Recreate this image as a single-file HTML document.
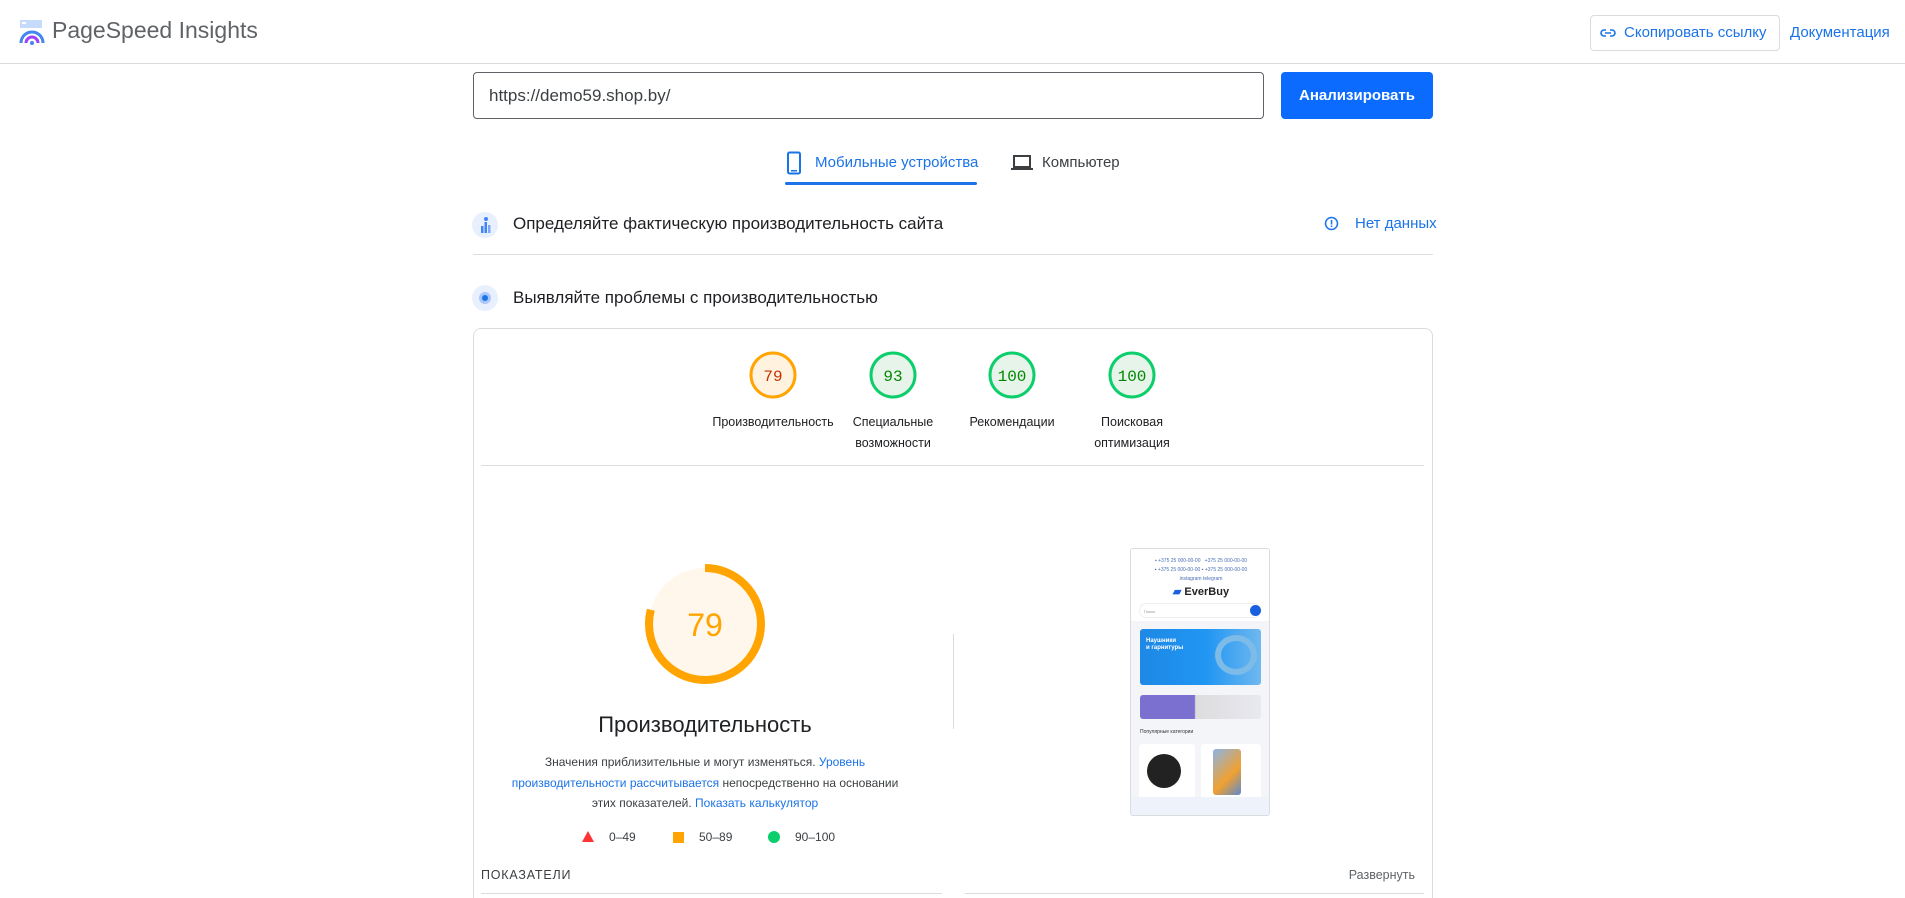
<!DOCTYPE html>
<html style="width:1905px;height:898px;overflow:hidden"><head><meta charset="utf-8"><style>
*{box-sizing:border-box;margin:0;padding:0}
body{width:1905px;height:898px;overflow:hidden;background:#fff;font-family:"Liberation Sans",Arial,sans-serif;color:#202124;position:relative}
.a{position:absolute}
.blue{color:#1a73e8}
</style></head><body>
<!-- header -->
<div class="a" style="left:0;top:63px;width:1905px;height:1px;background:#dadce0"></div>
<svg class="a" style="left:19px;top:19px" width="26" height="26" viewBox="0 0 26 26">
<rect x="1" y="1" width="22" height="8" fill="#c6dafc"/><rect x="3" y="3" width="4" height="2" fill="#fff"/>
<path d="M2 24 A11 11 0 0 1 24 24" fill="none" stroke="#4285f4" stroke-width="3"/>
<path d="M7 24 A6 6 0 0 1 19 24" fill="none" stroke="#a142f4" stroke-width="3"/>
<circle cx="13" cy="24" r="2" fill="#4285f4"/></svg>
<div class="a" style="left:52px;top:17px;font-size:23px;color:#5f6368">PageSpeed Insights</div>
<div class="a" style="left:1590px;top:15px;width:190px;height:36px;border:1px solid #dadce0;border-radius:4px;font-size:15px;color:#1a73e8;line-height:34px;padding-left:33px">Скопировать ссылку</div>
<svg class="a" style="left:1600px;top:26px" width="16" height="14" viewBox="0 0 16 14"><path d="M6 4H4a3 3 0 0 0 0 6h2M10 4h2a3 3 0 0 1 0 6h-2M5 7h6" fill="none" stroke="#1a73e8" stroke-width="1.6"/></svg>
<div class="a blue" style="left:1790px;top:24px;font-size:15px">Документация</div>
<!-- input -->
<div class="a" style="left:473px;top:72px;width:791px;height:47px;border:1px solid #5f6368;border-radius:4px;font-size:17px;line-height:45px;padding-left:15px;color:#3c4043">https://demo59.shop.by/</div>
<div class="a" style="left:1281px;top:72px;width:152px;height:47px;background:#0b6bff;border-radius:4px;color:#fff;font-size:15px;font-weight:bold;text-align:center;line-height:47px">Анализировать</div>
<!-- tabs -->
<svg class="a" style="left:786px;top:151px" width="16" height="24" viewBox="0 0 16 24"><rect x="2" y="1.5" width="12" height="21" rx="1.5" fill="none" stroke="#1a73e8" stroke-width="2"/><rect x="5" y="19" width="6" height="1.5" fill="#1a73e8"/></svg>
<div class="a blue" style="left:815px;top:154px;font-size:15px">Мобильные устройства</div>
<div class="a" style="left:785px;top:182px;width:192px;height:3px;background:#1a73e8;border-radius:2px"></div>
<svg class="a" style="left:1011px;top:154px" width="22" height="18" viewBox="0 0 22 18"><rect x="3" y="2" width="16" height="11" fill="none" stroke="#3c4043" stroke-width="2"/><rect x="0" y="14" width="22" height="2" fill="#3c4043"/></svg>
<div class="a" style="left:1042px;top:154px;font-size:15px;color:#3c4043">Компьютер</div>
<!-- sections -->
<svg class="a" style="left:472px;top:212px" width="26" height="26"><circle cx="13" cy="13" r="13" fill="#e8f0fe"/><rect x="9" y="14" width="2.5" height="7" fill="#4285f4"/><rect x="12.5" y="10" width="2.5" height="11" fill="#4285f4"/><rect x="16" y="13" width="2.5" height="8" fill="#7baaf7"/><circle cx="14" cy="7" r="2" fill="#4285f4"/></svg>
<div class="a" style="left:513px;top:214px;font-size:17px">Определяйте фактическую производительность сайта</div>
<svg class="a" style="left:1324px;top:216px" width="15" height="15"><circle cx="7.5" cy="7.5" r="6" fill="none" stroke="#1a73e8" stroke-width="1.5"/><rect x="6.8" y="4" width="1.5" height="4.5" fill="#1a73e8"/><rect x="6.8" y="9.5" width="1.5" height="1.5" fill="#1a73e8"/></svg>
<div class="a blue" style="left:1355px;top:215px;font-size:15px">Нет данных</div>
<div class="a" style="left:473px;top:254px;width:960px;height:1px;background:#dadce0"></div>
<svg class="a" style="left:472px;top:285px" width="26" height="26"><circle cx="13" cy="13" r="13" fill="#e8f0fe"/><circle cx="13" cy="13" r="6" fill="#a8c7fa"/><circle cx="13" cy="13" r="3" fill="#1a73e8"/></svg>
<div class="a" style="left:513px;top:288px;font-size:17px">Выявляйте проблемы с производительностью</div>
<!-- card -->
<div class="a" style="left:473px;top:328px;width:960px;height:570px;border:1px solid #dadce0;border-bottom:none;border-radius:8px 8px 0 0"></div>
<svg class="a" style="left:0;top:0" width="1905" height="898">
<g font-family="Liberation Mono,monospace" font-size="16" text-anchor="middle">
<circle cx="773" cy="375" r="22" fill="#fff3e0" stroke="#ffa400" stroke-width="3"/>
<text x="773" y="381" fill="#c33300">79</text>
<circle cx="893" cy="375" r="22" fill="#e6f4ea" stroke="#0cce6b" stroke-width="3"/>
<text x="893" y="381" fill="#008800">93</text>
<circle cx="1012" cy="375" r="22" fill="#e6f4ea" stroke="#0cce6b" stroke-width="3"/>
<text x="1012" y="381" fill="#008800">100</text>
<circle cx="1132" cy="375" r="22" fill="#e6f4ea" stroke="#0cce6b" stroke-width="3"/>
<text x="1132" y="381" fill="#008800">100</text>
</g>
<circle cx="705" cy="624" r="56" fill="#fff7ec"/>
<circle cx="705" cy="624" r="56" fill="none" stroke="#ffa400" stroke-width="8" stroke-dasharray="278 352" transform="rotate(-90 705 624)"/>
<text x="705" y="636" font-family="Liberation Sans,sans-serif" font-size="32" fill="#ffa400" text-anchor="middle">79</text>
<polygon points="588,831 594,842 582,842" fill="#ff3333"/>
<rect x="673" y="832" width="11" height="11" fill="#ffa400"/>
<circle cx="774" cy="837" r="6" fill="#0cce6b"/>
</svg>
<div class="a" style="left:693px;top:412px;width:160px;text-align:center;font-size:12.5px;line-height:21px">Производительность</div>
<div class="a" style="left:833px;top:412px;width:120px;text-align:center;font-size:12.5px;line-height:21px">Специальные возможности</div>
<div class="a" style="left:952px;top:412px;width:120px;text-align:center;font-size:12.5px;line-height:21px">Рекомендации</div>
<div class="a" style="left:1072px;top:412px;width:120px;text-align:center;font-size:12.5px;line-height:21px">Поисковая оптимизация</div>
<div class="a" style="left:481px;top:465px;width:943px;height:1px;background:#dadce0"></div>
<div class="a" style="left:505px;top:712px;width:400px;text-align:center;font-size:22px;color:#202124">Производительность</div>
<div class="a" style="left:500px;top:752px;width:410px;text-align:center;font-size:12px;line-height:20.5px;color:#3c4043">Значения приблизительные и могут изменяться. <span class="blue">Уровень производительности рассчитывается</span> непосредственно на основании этих показателей. <span class="blue">Показать калькулятор</span></div>
<div class="a" style="left:609px;top:830px;font-size:12px;color:#3c4043">0–49</div>
<div class="a" style="left:699px;top:830px;font-size:12px;color:#3c4043">50–89</div>
<div class="a" style="left:795px;top:830px;font-size:12px;color:#3c4043">90–100</div>
<div class="a" style="left:953px;top:634px;width:1px;height:95px;background:#dadce0"></div>
<!-- thumbnail -->
<div class="a" style="left:1130px;top:548px;width:140px;height:268px;border:1px solid #dadce0;border-radius:3px;background:#fff;overflow:hidden">
<div class="a" style="left:0;top:8px;width:140px;text-align:center;font-size:5px;line-height:9px;color:#4a6fb5">▪ +375 25 000-00-00 &nbsp; +375 25 000-00-00<br>▪ +375 25 000-00-00 ▪ +375 25 000-00-00<br>instagram telegram</div>
<div class="a" style="left:0;top:36px;width:140px;text-align:center;font-size:11px;font-weight:bold;color:#222"><span style="color:#1a5fe0">▰</span> EverBuy</div>
<div class="a" style="left:8px;top:54px;width:122px;height:15px;border-radius:8px;border:1px solid #eee;font-size:4px;color:#999;padding:5px 4px">Поиск</div>
<div class="a" style="left:119px;top:56px;width:11px;height:11px;border-radius:50%;background:#1a5fe0"></div>
<div class="a" style="left:0;top:72px;width:140px;height:196px;background:#f3f5f9"></div>
<div class="a" style="left:9px;top:80px;width:121px;height:56px;border-radius:3px;background:linear-gradient(90deg,#1e88e5,#2196f3 55%,#6fb8ef);color:#fff;font-size:6px;line-height:7px;padding:9px 6px;font-weight:bold">Наушники<br>и гарнитуры</div>
<div class="a" style="left:84px;top:86px;width:42px;height:40px;border-radius:50%;border:6px solid #7dbbe8"></div>
<div class="a" style="left:9px;top:146px;width:121px;height:24px;border-radius:3px;background:linear-gradient(90deg,#7b6fd0 45%,#ddd 46%,#e8e8f0)"></div>
<div class="a" style="left:9px;top:180px;font-size:5px;color:#333">Популярные категории</div>
<div class="a" style="left:8px;top:195px;width:56px;height:55px;background:#fff;border-radius:3px"></div>
<div class="a" style="left:16px;top:205px;width:34px;height:34px;border-radius:50%;background:#222"></div>
<div class="a" style="left:70px;top:195px;width:60px;height:55px;background:#fff;border-radius:3px"></div>
<div class="a" style="left:82px;top:200px;width:28px;height:46px;border-radius:3px;background:linear-gradient(135deg,#8cb4e8,#f0a030 60%,#5a8ad0)"></div>
<div class="a" style="left:0;top:248px;width:140px;height:20px;background:#eef3fb"></div>
</div>
<div class="a" style="left:481px;top:868px;font-size:12.5px;letter-spacing:0.8px;color:#3c4043">ПОКАЗАТЕЛИ</div>
<div class="a" style="left:1345px;top:868px;width:70px;text-align:right;font-size:12.5px;color:#5f6368">Развернуть</div>
<div class="a" style="left:481px;top:893px;width:461px;height:1px;background:#dadce0"></div>
<div class="a" style="left:965px;top:893px;width:459px;height:1px;background:#dadce0"></div>
</body></html>
